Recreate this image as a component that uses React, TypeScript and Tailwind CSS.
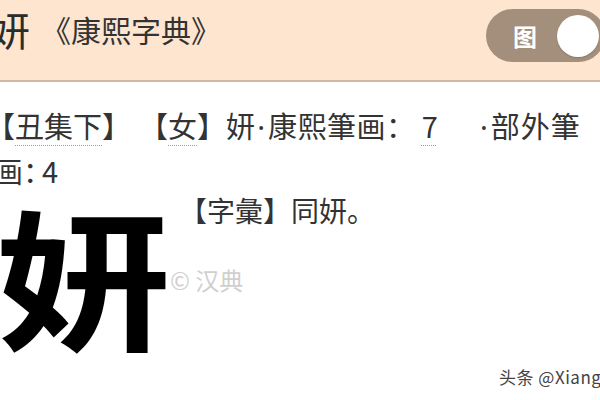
export default function App() {
  const cjk = { fontFamily: '"Noto Sans CJK SC", "Noto Sans", sans-serif' };
  const dotted = 'underline decoration-dotted decoration-[#999] underline-offset-[7px] decoration-1';

  return (
    <div
      className="relative w-[600px] h-[400px] overflow-hidden bg-white text-[#333] [text-spacing-trim:space-all]"
      style={cjk}
    >
      {/* Header */}
      <header className="h-[82px] bg-[#fde5cf] border-b-2 border-[#cdb9a5] flex items-start justify-between">
        <div className="flex items-center -ml-[10px] mt-[4px] h-[50px]">
          <span className="text-[40px] leading-[50px] text-[#2b2b2b]">妍</span>
          <span className="text-[30px] leading-[40px] ml-[11px] text-[#333]">《康熙字典》</span>
        </div>
        <div className="mt-[9px] -mr-[5px] w-[119px] h-[53px] rounded-full bg-[#a38f7b] flex items-center pl-[27px] gap-[20px]">
          <span className="text-white text-[24px] font-bold leading-none">图</span>
          <span className="w-[42px] h-[42px] rounded-full bg-white shadow-[0_1px_2px_rgba(0,0,0,0.15)]" />
        </div>
      </header>

      {/* Entry header lines */}
      <div className="mt-[20px] text-[29px] leading-[46px] text-[#333]">
        <div className="-ml-[14px] whitespace-nowrap">
          <span>【</span>
          <span className={dotted}>丑集下</span>
          <span>】</span>
          <span className="ml-[8px]">【</span>
          <span className={dotted}>女</span>
          <span>】</span>
          <span>妍</span>
          <span className="inline-block w-[12px] text-center font-['Noto_Sans']">·</span>
          <span className="ml-[1px] tracking-[0.5px]">康熙筆画：</span>
          <span className={'ml-[6px] ' + dotted}>7</span>
          <span className="inline-block w-[50px] text-right font-['Noto_Sans']">·</span>
          <span className="ml-[3px] tracking-[1px]">部外筆</span>
        </div>
        <div className="-ml-[6px] -mt-[3px] whitespace-nowrap">
          <span>画：</span>
          <span className="-ml-[10px]">4</span>
        </div>
      </div>

      {/* Glyph image and note */}
      <div className="flex">
        <div className="w-[182px] shrink-0 -ml-[4px] mt-[4px]">
          <span className="block origin-left scale-x-[1.15] text-[152px] leading-[152px] font-bold text-black">妍</span>
        </div>
        <div className="-mt-[1px] ml-[1px] text-[28px] leading-[36px] whitespace-nowrap">【字彙】同妍。</div>
      </div>

      {/* Watermarks */}
      <div className="absolute left-[170px] top-[264px] text-[24px] leading-[32px] text-[#cfcfcf]">© 汉典</div>
      <div className="absolute left-[499px] top-[366px] text-[17px] leading-[22px] text-[#444] whitespace-nowrap tracking-[0.5px]">
        头条 @Xiang
      </div>
    </div>
  );
}
